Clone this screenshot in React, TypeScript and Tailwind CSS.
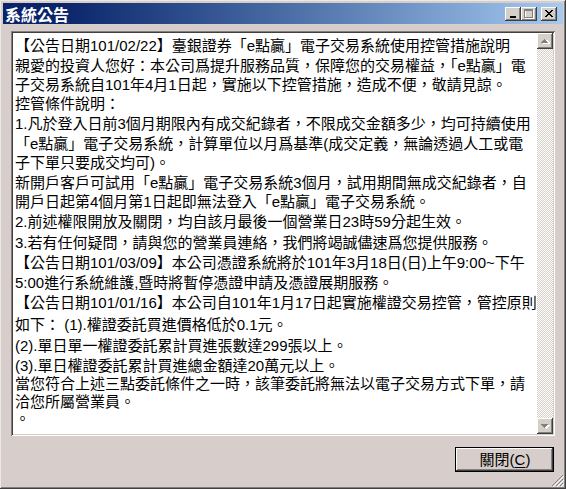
import React from "react";

type Line = { t: string; mt: string };

const lines: Line[] = [
  { t: "【公告日期101/02/22】臺銀證券「e點贏」電子交易系統使用控管措施說明", mt: "mt-0" },
  { t: "親愛的投資人您好：本公司爲提升服務品質，保障您的交易權益，「e點贏」電", mt: "mt-[1px]" },
  { t: "子交易系統自101年4月1日起，實施以下控管措施，造成不便，敬請見諒。", mt: "mt-0" },
  { t: "控管條件說明：", mt: "mt-0" },
  { t: "1.凡於登入日前3個月期限內有成交紀錄者，不限成交金額多少，均可持續使用", mt: "mt-[1px]" },
  { t: "「e點贏」電子交易系統，計算單位以月爲基準(成交定義，無論透過人工或電", mt: "mt-[1px]" },
  { t: "子下單只要成交均可)。", mt: "mt-0" },
  { t: "新開戶客戶可試用「e點贏」電子交易系統3個月，試用期間無成交紀錄者，自", mt: "mt-[1px]" },
  { t: "開戶日起第4個月第1日起即無法登入「e點贏」電子交易系統。", mt: "mt-0" },
  { t: "2.前述權限開放及關閉，均自該月最後一個營業日23時59分起生效。", mt: "mt-[1px]" },
  { t: "3.若有任何疑問，請與您的營業員連絡，我們將竭誠儘速爲您提供服務。", mt: "mt-[2px]" },
  { t: "【公告日期101/03/09】本公司憑證系統將於101年3月18日(日)上午9:00~下午", mt: "mt-[1px]" },
  { t: "5:00進行系統維護,暨時將暫停憑證申請及憑證展期服務。", mt: "mt-[1px]" },
  { t: "【公告日期101/01/16】本公司自101年1月17日起實施權證交易控管，管控原則", mt: "mt-[1px]" },
  { t: "如下： (1).權證委託買進價格低於0.1元。", mt: "mt-[3px]" },
  { t: "(2).單日單一權證委託累計買進張數達299張以上。", mt: "mt-[2px]" },
  { t: "(3).單日權證委託累計買進總金額達20萬元以上。", mt: "mt-[1px]" },
  { t: "當您符合上述三點委託條件之一時，該筆委託將無法以電子交易方式下單，請", mt: "-mt-[1px]" },
  { t: "洽您所屬營業員。", mt: "-mt-[1px]" },
  { t: "。", mt: "-mt-[2px]" },
];

function CaptionButton({ children }: { children: React.ReactNode }) {
  return (
    <div className="w-[16px] h-[14px] bg-[#d4d0c8] flex items-center justify-center shadow-[inset_-1px_-1px_#404040,inset_1px_1px_#ffffff,inset_-2px_-2px_#808080]">
      {children}
    </div>
  );
}

function ScrollArrow({ up }: { up: boolean }) {
  return (
    <div className="w-[16px] h-[16px] bg-[#d4d0c8] flex items-center justify-center shadow-[inset_-1px_-1px_#404040,inset_1px_1px_#ffffff,inset_-2px_-2px_#808080,inset_2px_2px_#d4d0c8]">
      <svg width="9" height="6" viewBox="0 0 9 6" shapeRendering="crispEdges">
        {up ? (
          <>
            <path d="M1 5h8M2 4h6M3 3h4M4 2h2" stroke="#ffffff" strokeWidth="1" transform="translate(0.5,0.5)" />
            <path d="M0 4.5h7M1 3.5h5M2 2.5h3M3 1.5h1" stroke="#808080" strokeWidth="1" />
          </>
        ) : (
          <>
            <path d="M1 1.5h7M2 2.5h5M3 3.5h3M4 4.5h1" stroke="#ffffff" strokeWidth="1" transform="translate(0.5,0.5)" />
            <path d="M0 1.5h7M1 2.5h5M2 3.5h3M3 4.5h1" stroke="#808080" strokeWidth="1" />
          </>
        )}
      </svg>
    </div>
  );
}

export default function App() {
  return (
    <div className="relative w-[566px] h-[489px] bg-[#d7cecb] p-[3px] flex flex-col shadow-[inset_-1px_-1px_#404040,inset_1px_1px_#ece8e4,inset_-2px_-2px_#808080] font-['Liberation_Sans','Noto_Sans_CJK_TC',sans-serif] overflow-hidden">
      {/* Title bar */}
      <div className="h-[21px] flex items-center bg-linear-to-r from-[#0a246a] from-10% to-[#a6caf0] pl-[2px] pr-[6px]">
        <div className="text-white font-bold text-[16px] leading-[20px] font-['Noto_Sans_CJK_TC','Liberation_Sans',sans-serif]">
          系統公告
        </div>
        <div className="flex-1" />
        <div className="flex items-center">
          <CaptionButton>
            <svg width="8" height="8" viewBox="0 0 8 8" shapeRendering="crispEdges">
              <rect x="1" y="6" width="6" height="2" fill="#000" />
            </svg>
          </CaptionButton>
          <CaptionButton>
            <svg width="10" height="10" viewBox="0 0 10 10" shapeRendering="crispEdges">
              <rect x="1.5" y="1.5" width="8" height="8" fill="none" stroke="#ffffff" />
              <rect x="0.5" y="0.5" width="8" height="8" fill="none" stroke="#808080" />
              <rect x="0" y="1" width="9" height="1" fill="#808080" />
            </svg>
          </CaptionButton>
          <div className="ml-[4px]">
            <CaptionButton>
              <svg width="8" height="7" viewBox="0 0 8 7" shapeRendering="crispEdges">
                <path d="M0 0h2v1H0zM6 0h2v1H6zM1 1h2v1H1zM5 1h2v1H5zM2 2h4v1H2zM3 3h2v1H3zM2 4h4v1H2zM1 5h2v1H1zM5 5h2v1H5zM0 6h2v1H0zM6 6h2v1H6z" fill="#000" />
              </svg>
            </CaptionButton>
          </div>
        </div>
      </div>

      {/* Body */}
      <div className="flex-1 flex flex-col px-[8px] pt-[7px]">
        <div className="h-[405px] flex p-[2px] bg-white shadow-[inset_1px_1px_#808080,inset_-1px_-1px_#ffffff,inset_2px_2px_#404040,inset_-2px_-2px_#d4d0c8]">
          <div className="flex-1 bg-white overflow-hidden pl-[2px] pt-[3px] text-black text-[15px]">
            {lines.map((l, i) => (
              <div key={i} className={`whitespace-pre h-[19px] leading-[19px] ${l.mt}`}>
                {l.t}
              </div>
            ))}
          </div>
          <div className="w-[16px] flex flex-col">
            <ScrollArrow up={true} />
            <div className="flex-1 bg-[repeating-conic-gradient(#d4d0c8_0_25%,#ffffff_0_50%)] bg-[length:2px_2px]" />
            <ScrollArrow up={false} />
          </div>
        </div>

        <div className="flex justify-end pr-[1px] mt-[11px]">
          <div className="w-[99px] h-[25px] border border-black bg-[#d7cecb] flex items-center justify-center shadow-[inset_-1px_-1px_#404040,inset_1px_1px_#ffffff,inset_-2px_-2px_#808080]">
            <span className="text-[15px] leading-[18px] text-black ml-[1px]">
              關閉(<span className="underline underline-offset-2">C</span>)
            </span>
          </div>
        </div>
      </div>

      {/* Resize grip */}
      <svg className="absolute right-[2px] bottom-[2px]" width="12" height="12" viewBox="0 0 12 12" shapeRendering="crispEdges">
        <path d="M11 0L0 11M11 4L4 11M11 8L8 11" stroke="#808080" strokeWidth="1.2" />
        <path d="M12 1L1 12M12 5L5 12M12 9L9 12" stroke="#ffffff" strokeWidth="1" />
      </svg>
    </div>
  );
}
